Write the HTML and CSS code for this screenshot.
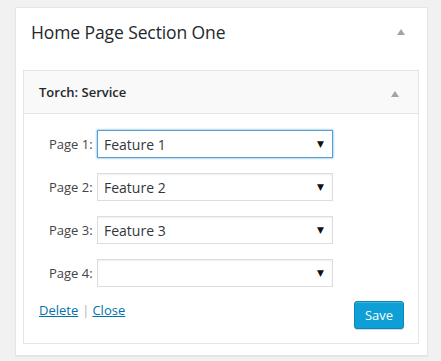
FILE: index.html
```html
<!DOCTYPE html>
<html>
<head>
<meta charset="utf-8">
<link rel="stylesheet" href="styles.css">
</head>
<body>
<div class="card">
  <div class="card-head">
    <h2 class="card-title">Home Page Section One</h2>
    <span class="toggle"></span>
  </div>
  <div class="widget">
    <div class="widget-top">
      <h3 class="widget-title">Torch: Service</h3>
      <span class="toggle small"></span>
    </div>
    <div class="widget-inside">
      <div class="row"><label class="lbl">Page 1:</label><div class="sel focus"><span class="val">Feature 1</span><span class="arrow">▼</span></div></div>
      <div class="row"><label class="lbl">Page 2:</label><div class="sel"><span class="val">Feature 2</span><span class="arrow">▼</span></div></div>
      <div class="row"><label class="lbl">Page 3:</label><div class="sel"><span class="val">Feature 3</span><span class="arrow">▼</span></div></div>
      <div class="row"><label class="lbl">Page 4:</label><div class="sel"><span class="val"></span><span class="arrow">▼</span></div></div>
      <div class="footer">
        <div class="links"><a class="link" href="#">Delete</a><span class="sep">|</span><a class="link" href="#">Close</a></div>
        <button class="save">Save</button>
      </div>
    </div>
  </div>
</div>
</body>
</html>
```
FILE: styles.css
```css
* { box-sizing: border-box; }
body {
  margin: 0;
  padding: 7px 13px 6px 15px;
  background: #f1f1f1;
  font-family: "Open Sans", "Noto Sans", sans-serif;
  color: #444;
}
.card {
  width: 413px;
  height: 349px;
  background: #fff;
  border: 1px solid #e5e5e5;
  box-shadow: 0 1px 1px rgba(0,0,0,.04);
  padding: 0 8px 10px 7px;
}
.card-head {
  height: 62px;
  display: flex;
  justify-content: space-between;
  padding: 12px 14px 0 8px;
}
.card-title {
  margin: 0;
  font-size: 17.5px;
  font-weight: 400;
  color: #23282d;
  line-height: 24px;
  letter-spacing: -0.1px;
}
.toggle {
  width: 0; height: 0;
  border-left: 4px solid transparent;
  border-right: 4px solid transparent;
  border-bottom: 6px solid #a0a5aa;
  margin-top: 9px;
}
.toggle.small { margin-top: 3px; }
.widget {
  border: 1px solid #e5e5e5;
  background: #fff;
}
.widget-top {
  height: 43px;
  background: #f9f9f9;
  border-bottom: 1px solid #e5e5e5;
  display: flex;
  justify-content: space-between;
  align-items: center;
  padding: 0 19px 0 15px;
}
.widget-title {
  margin: 0;
  font-size: 13px;
  font-weight: 600;
  color: #23282d;
}
.widget-inside {
  padding: 16px 14px 14px 15px;
}
.row {
  display: flex;
  align-items: center;
  height: 28px;
  margin-bottom: 15px;
  padding-left: 10px;
}
.lbl {
  width: 48px;
  font-size: 13px;
  color: #444;
}
.sel {
  width: 236px;
  height: 28px;
  border: 1px solid #ddd;
  box-shadow: inset 0 1px 2px rgba(0,0,0,.07);
  display: flex;
  align-items: center;
  justify-content: space-between;
  padding: 0 8px 0 6px;
  font-size: 14px;
  color: #32373c;
}
.sel.focus {
  border-color: #5b9dd9;
  box-shadow: 0 0 2px rgba(30,140,190,.8);
}
.arrow {
  font-size: 9px;
  color: #111;
  font-family: "DejaVu Sans", sans-serif;
}
.footer {
  display: flex;
  justify-content: space-between;
  align-items: flex-start;
  margin-top: -1px;
}
.links {
  font-size: 13px;
  color: #ccc;
}
.link {
  color: #0073aa;
  text-decoration: underline;
}
.sep { margin: 0 3px 0 4px; color: #b4b4b4; }
.save {
  width: 50px;
  height: 28px;
  background: #0e9fd6;
  border: 1px solid #0a87b8;
  border-radius: 3px;
  color: #fff;
  font-family: inherit;
  font-size: 13px;
  padding: 0;
  box-shadow: inset 0 1px 0 rgba(120,200,230,.5), 0 1px 0 rgba(0,0,0,.15);
}
```
